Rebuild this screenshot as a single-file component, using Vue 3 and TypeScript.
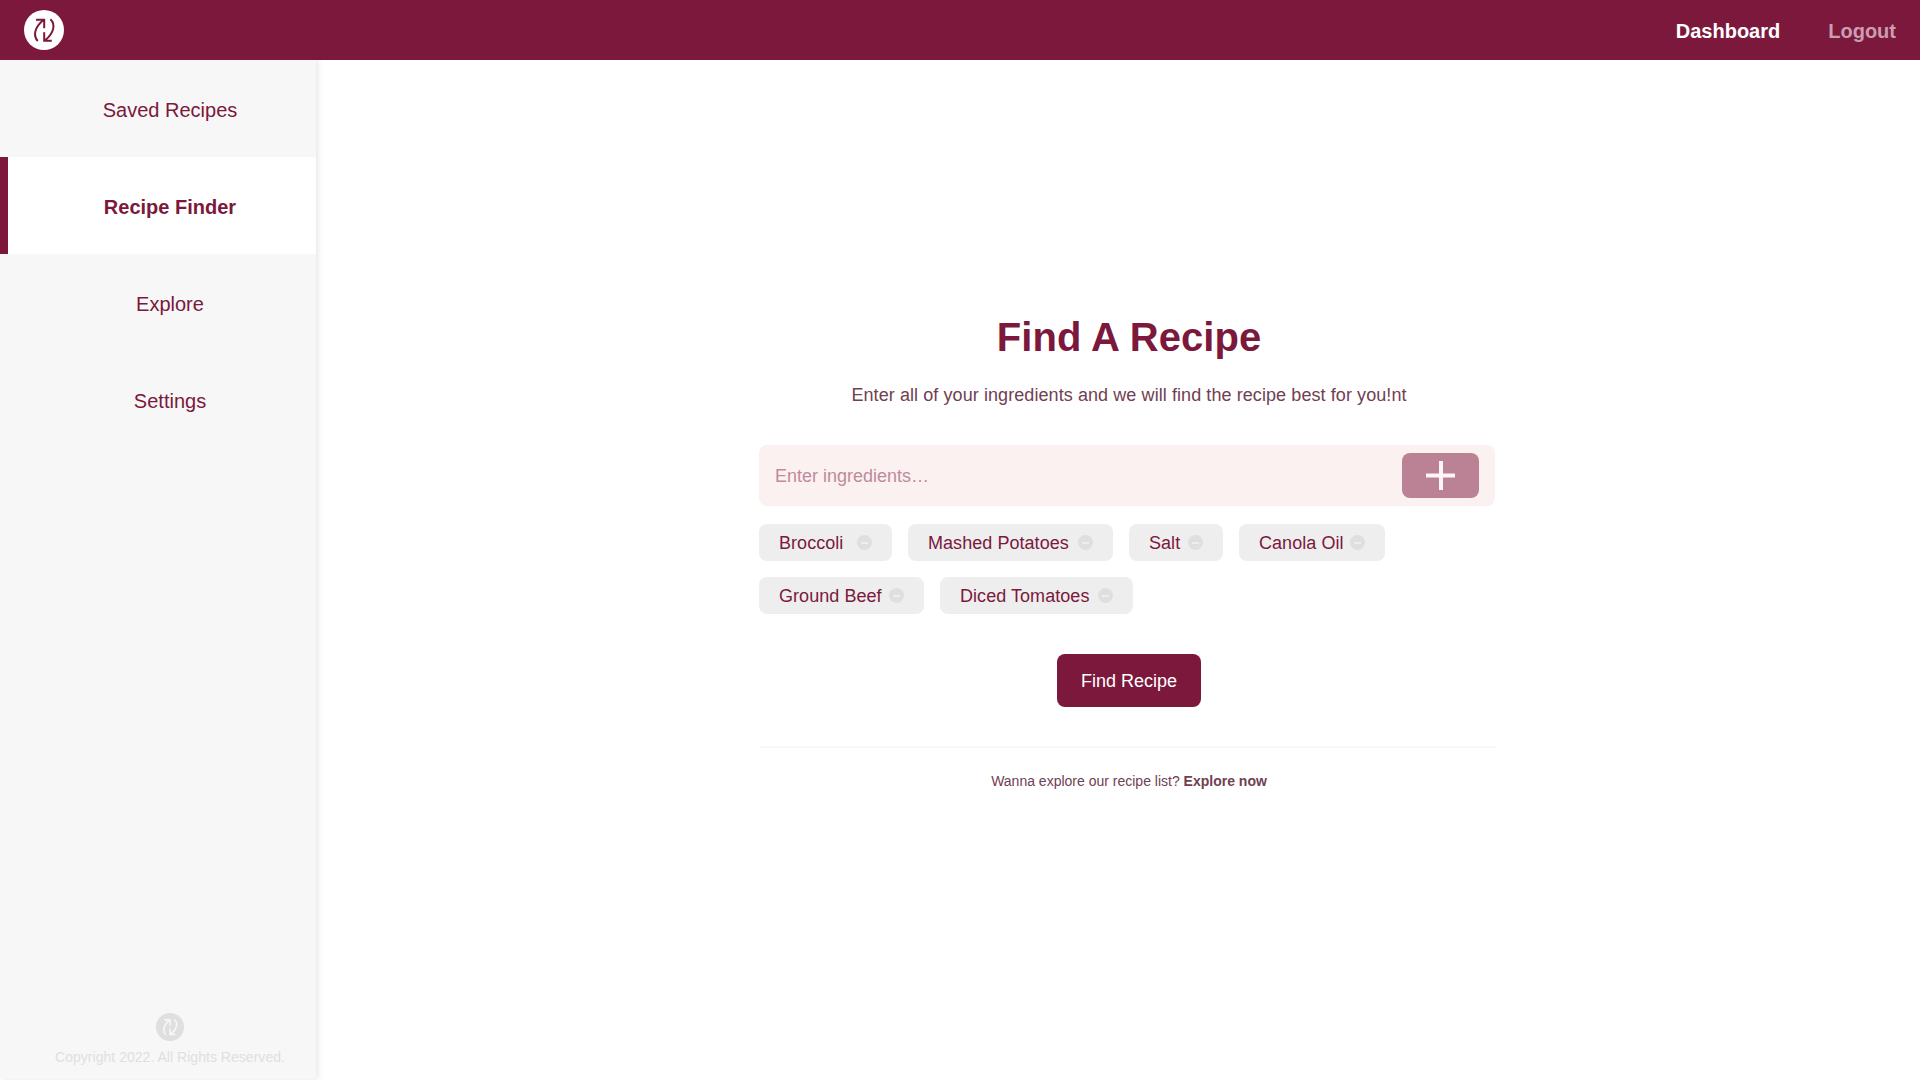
<script setup lang="ts">
interface NavItem {
  label: string
  active?: boolean
}

interface Ingredient {
  name: string
  width: number
}

const navItems: NavItem[] = [
  { label: 'Saved Recipes' },
  { label: 'Recipe Finder', active: true },
  { label: 'Explore' },
  { label: 'Settings' },
]

const ingredients: Ingredient[] = [
  { name: 'Broccoli', width: 133 },
  { name: 'Mashed Potatoes', width: 205 },
  { name: 'Salt', width: 94 },
  { name: 'Canola Oil', width: 146 },
  { name: 'Ground Beef', width: 165 },
  { name: 'Diced Tomatoes', width: 193 },
]
</script>

<template>
  <div class="app">
    <header class="topbar">
      <svg class="logo" viewBox="0 0 40 40">
        <circle cx="20" cy="20" r="20" fill="#fff" />
        <g fill="none" stroke="#7b183c" stroke-width="2">
          <path d="M13.8 31C9.6 26.5 9.2 18.2 19.8 9.8M12 9.8H20.2V18.2" />
          <path d="M26.4 9.3C31.2 13.8 31 22.4 20.6 30.7M20.2 22.2V30.7H27.8" />
        </g>
      </svg>
      <nav class="links">
        <a class="link">Dashboard</a>
        <a class="link faded">Logout</a>
      </nav>
    </header>

    <div class="body">
      <aside class="sidebar">
        <a v-for="item in navItems" :key="item.label" class="item" :class="{ active: item.active }">
          {{ item.label }}
        </a>
        <div class="copyright">
          <svg class="mark" viewBox="0 0 40 40">
            <circle cx="20" cy="20" r="20" fill="#dfdfdf" />
            <g fill="none" stroke="#f7f7f7" stroke-width="2.2">
              <path d="M13.8 31C9.6 26.5 9.2 18.2 19.8 9.8M12 9.8H20.2V18.2" />
              <path d="M26.4 9.3C31.2 13.8 31 22.4 20.6 30.7M20.2 22.2V30.7H27.8" />
            </g>
          </svg>
          <span>Copyright 2022. All Rights Reserved.</span>
        </div>
      </aside>

      <main class="main">
        <section class="finder">
          <h1>Find A Recipe</h1>
          <p class="lead">Enter all of your ingredients and we will find the recipe best for you!nt</p>
          <div class="field">
            <span class="placeholder">Enter ingredients…</span>
            <button class="add">
              <svg width="29" height="29" viewBox="0 0 29 29">
                <path d="M0 14.5H29M15 0V29" stroke="#fdf5f6" stroke-width="4" />
              </svg>
            </button>
          </div>
          <div class="chips">
            <div v-for="item in ingredients" :key="item.name" class="chip" :style="{ width: item.width + 'px' }">
              <span class="name">{{ item.name }}</span>
              <svg width="15" height="15" viewBox="0 0 15 15">
                <circle cx="7.5" cy="7.5" r="7.5" fill="#dfdfdf" />
                <path d="M4 8H11" stroke="#eee" stroke-width="2" />
              </svg>
            </div>
          </div>
          <button class="submit">Find Recipe</button>
          <div class="rule"></div>
          <p class="more">Wanna explore our recipe list? <b>Explore now</b></p>
        </section>
      </main>
    </div>
  </div>
</template>

<style>
body {
  margin: 0;
  background: #fff;
}
</style>

<style scoped>
.app {
  display: flex;
  flex-direction: column;
  height: 1080px;
  overflow: hidden;
  background: #fff;
  color: #7b183c;
  font-family: "Liberation Sans", Arial, sans-serif;
}
.topbar {
  display: flex;
  flex: none;
  align-items: center;
  justify-content: space-between;
  box-sizing: border-box;
  height: 60px;
  padding: 0 24px;
  background: #7b183c;
}
.logo {
  width: 40px;
  height: 40px;
}
.links {
  display: flex;
  gap: 48px;
  padding-top: 2px;
  font-size: 20px;
  font-weight: bold;
}
.link {
  color: #fff;
}
.faded {
  color: #cb9db0;
}
.body {
  display: flex;
  flex: 1;
  min-height: 0;
}
.sidebar {
  display: flex;
  flex: none;
  flex-direction: column;
  width: 316px;
  height: 1019px;
  background: #f7f7f7;
  box-shadow: 2px 0 6px rgba(0, 0, 0, 0.1);
  clip-path: inset(0 -12px -1px 0);
}
.item {
  display: flex;
  align-items: center;
  justify-content: center;
  box-sizing: border-box;
  height: 97px;
  padding: 3px 0 0 24px;
  font-size: 20px;
}
.item.active {
  padding-left: 16px;
  border-left: 8px solid #7b183c;
  background: #fff;
  font-weight: bold;
}
.copyright {
  display: flex;
  flex-direction: column;
  align-items: center;
  gap: 8px;
  margin-top: auto;
  padding: 0 0 14px 24px;
  color: #dfdfdf;
  font-size: 14px;
  line-height: 16px;
  letter-spacing: 0.03px;
}
.mark {
  width: 28px;
  height: 28px;
}
.main {
  display: flex;
  flex: 1;
  justify-content: center;
  padding: 257px 0 0 22px;
}
.finder {
  display: flex;
  flex-direction: column;
  align-items: center;
  width: 740px;
}
h1 {
  margin: 0;
  font-size: 40px;
  line-height: 40px;
  letter-spacing: 0.05px;
}
.lead {
  margin: 28px 0 40px;
  color: #704053;
  font-size: 18px;
  line-height: 20px;
  letter-spacing: 0.08px;
}
.field {
  display: flex;
  align-items: center;
  align-self: flex-start;
  justify-content: space-between;
  box-sizing: border-box;
  width: 736px;
  height: 61px;
  padding: 0 16px;
  border-radius: 8px;
  background: #fcf1f1;
}
.placeholder {
  padding-top: 2px;
  color: #c08a9d;
  font-size: 18px;
}
.add {
  display: flex;
  align-items: center;
  justify-content: center;
  width: 77px;
  height: 45px;
  padding: 0 1px 0 0;
  border: 0;
  border-radius: 8px;
  background: #bb8295;
}
.chips {
  display: flex;
  flex-wrap: wrap;
  align-self: flex-start;
  gap: 16px;
  width: 640px;
  margin-top: 18px;
}
.chip {
  display: flex;
  align-items: center;
  justify-content: space-between;
  box-sizing: border-box;
  height: 37px;
  padding: 0 20px;
  border-radius: 8px;
  background: #eee;
  font-size: 18px;
  letter-spacing: 0.05px;
  white-space: nowrap;
}
.name {
  padding-top: 1px;
}
.submit {
  width: 144px;
  height: 53px;
  margin-top: 40px;
  padding: 2px 0 0;
  border: 0;
  border-radius: 8px;
  background: #7b183c;
  color: #fff;
  font-family: inherit;
  font-size: 18px;
}
.rule {
  align-self: flex-start;
  width: 736px;
  height: 2px;
  margin: 39px 0 0 1px;
  border-radius: 1px;
  background: #fcf6f7;
}
.more {
  margin: 25px 0 0;
  color: #704053;
  font-size: 14px;
  line-height: 16px;
}
</style>
